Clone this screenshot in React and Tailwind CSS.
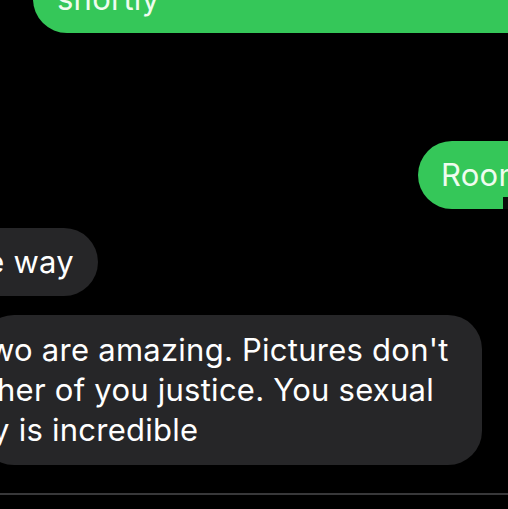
export default function App() {
  const font = { fontFamily: 'Inter, "Liberation Sans", sans-serif' };

  return (
    <div
      className="w-[508px] h-[509px] bg-black overflow-hidden flex flex-col items-start text-[31px] leading-[40px] tracking-[0.25px]"
      style={font}
    >
      {/* outgoing, cut off at the top */}
      <div className="mt-[-35px] ml-[33px] w-[520px] shrink-0 rounded-bl-[34px] bg-[#35c759] pl-[24px] pt-[14px] pb-[14px] text-[#effcef]">
        shortly
      </div>

      {/* outgoing, cut off at the right */}
      <div className="relative mt-[108px] ml-[418px] w-[130px] shrink-0 rounded-[34px] bg-[#35c759] pl-[23px] py-[14px] text-[#effcef] whitespace-nowrap">
        Room
        <div className="absolute right-[40px] bottom-0 w-[5px] h-[12px] bg-[#0b0f0b]" />
      </div>

      {/* incoming */}
      <div className="mt-[19px] ml-[-40px] w-[138px] shrink-0 flex justify-end rounded-[34px] bg-[#262628] pr-[24px] py-[14px] text-white whitespace-nowrap">
        e way
      </div>

      <div className="mt-[19px] ml-[-20px] w-[502px] shrink-0 rounded-[34px] bg-[#262628] py-[15px] text-white whitespace-nowrap">
        <div className="ml-[9px]">wo are amazing. Pictures don't</div>
        <div className="ml-[17px]">her of you justice. You sexual</div>
        <div className="ml-[12px]">y is incredible</div>
      </div>

      <div className="mt-[28px] w-full h-[2px] shrink-0 bg-[#38383a]" />
    </div>
  );
}
